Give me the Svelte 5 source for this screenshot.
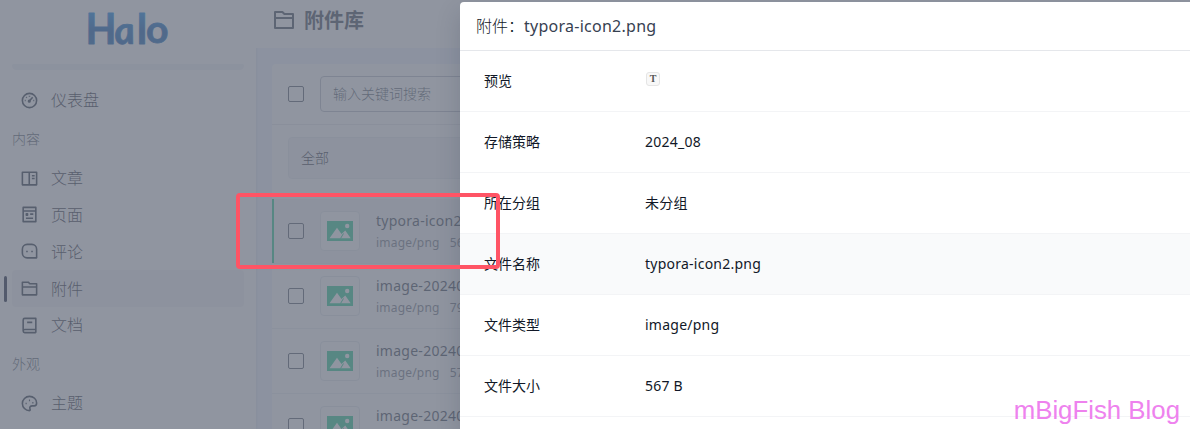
<script>
  const icons = {
    dash: '<circle cx="12" cy="12" r="9"/><path d="M11 13.5l5-5.5M12 6v1.2M7.8 7.8l.8.8M6 12h1.2M16.8 12H18"/><circle cx="11.7" cy="12.8" r="1"/>',
    post: '<path d="M3 4h18v16H3zM11.7 4v16M15 8.5h3.5M15 12h3.5"/>',
    page: '<path d="M4 3h16v18H4zM4 7.5h16M12.8 11.5h4M7.5 16.8h9"/><path d="M8 11v2h1.5v-2z"/>',
    chat: '<path d="M9 3h6a6 6 0 0 1 6 6v11H9a6 6 0 0 1-6-6V9a6 6 0 0 1 6-6z"/><path d="M8.8 11v2M15.2 11v2"/>',
    folder: '<path d="M3 4h7.4l2 2H21v14H3zM3 10h18"/>',
    book: '<path d="M20 17V3H6a2 2 0 0 0-2 2v14a2 2 0 0 0 2 2h14M4 19a2 2 0 0 1 2-2h14v4M9 8h6.5"/>',
    palette: '<path d="M12 3a9 9 0 1 0 0 18c1 0 1-1 .6-2.100C11.700 16.500 13 15 15.500 15H18c2 0 3-1.700 3-3.700C21 6.500 17 3 12 3z"/><path d="M7 12h1.500M11.300 8h1.400M15.500 11h1.500"/>'
  };
  const content = [
    ['post', '文章'], ['page', '页面'], ['chat', '评论'], ['folder', '附件'], ['book', '文档']
  ];
  const files = [
    ['typora-icon2.png', '567 B'],
    ['image-20240813.png', '79.2 KB'],
    ['image-20240812.png', '57.1 KB'],
    ['image-20240811.png', '']
  ];
  const details = [
    ['预览', null], ['存储策略', '2024_08'], ['所在分组', '未分组'],
    ['文件名称', 'typora-icon2.png'], ['文件类型', 'image/png'], ['文件大小', '567 B']
  ];
</script>

{#snippet icon(name)}
  <svg class="icon" viewBox="0 0 24 24">{@html icons[name]}</svg>
{/snippet}

{#snippet item(name, label)}
  <div class="item" class:active={name === 'folder'}>{@render icon(name)}<span>{label}</span></div>
{/snippet}

<div class="app">
  <aside>
    <svg class="logo" viewBox="0 0 84 40" width="84" height="40">
      <defs>
        <linearGradient id="lg" gradientUnits="userSpaceOnUse" x1="0" y1="5" x2="0" y2="37">
          <stop offset="0" stop-color="#0080e4" />
          <stop offset=".6" stop-color="#0050a8" />
          <stop offset="1" stop-color="#0058ac" />
        </linearGradient>
        <linearGradient id="lga" gradientUnits="userSpaceOnUse" x1="0" y1="-24" x2="0" y2="0">
          <stop offset="0" stop-color="#0068c4" />
          <stop offset="1" stop-color="#0050a8" />
        </linearGradient>
      </defs>
      <g fill="url(#lg)" stroke="url(#lg)" stroke-width=".8" stroke-linejoin="round">
        <text x="-.5" y="36.500" textLength="31" lengthAdjust="spacingAndGlyphs">H</text>
        <text class="slant" fill="url(#lga)" stroke="url(#lga)" transform="translate(29.800 36.500) skewX(8) scale(.94 .91)">a</text>
        <text x="50.700" y="36.500">l</text>
        <text x="60" y="36.300" textLength="22.500" lengthAdjust="spacingAndGlyphs" class="round">o</text>
      </g>
    </svg>
    <div class="search"></div>
    <nav>
      {@render item('dash', '仪表盘')}
      <div class="label">内容</div>
      {#each content as [name, label]}{@render item(name, label)}{/each}
      <div class="label">外观</div>
      {@render item('palette', '主题')}
    </nav>
  </aside>

  <main>
    <header>{@render icon('folder')}<h1>附件库</h1></header>
    <section class="card">
      <div class="toolbar"><i class="check"></i><div class="input">输入关键词搜索</div></div>
      <div class="group">全部</div>
      {#each files as [name, size], i}
        <div class="file" class:selected={i === 0}>
          <i class="check"></i>
          <div class="thumb">
            <svg viewBox="0 0 26 20" width="26" height="20">
              <path d="M0 0h26v20H0z" fill="#1cc88c" />
              <path d="M2.500 17.300 10 6.700l4.500 6.400 3.800-3.600 5.400 7.800z" fill="#fff" />
              <path d="M13.500 17.500l3-5" stroke="#1cc88c" />
              <circle cx="20.200" cy="5" r="2.200" fill="#fff" />
            </svg>
          </div>
          <div class="meta">
            <b>{name}</b>
            <small>{#if size}<span>image/png</span><span>{size}</span>{/if}</small>
          </div>
        </div>
      {/each}
    </section>
  </main>

  <div class="mask"></div>

  <div class="drawer">
    <div class="title">附件：<span>typora-icon2.png</span></div>
    {#each details as [label, value]}
      <div class="row" class:hover={label === '文件名称'}>
        <div class="key">{label}</div>
        <div class="value">{#if value}{value}{:else}<span class="preview">T</span>{/if}</div>
      </div>
    {/each}
  </div>

  <div class="marker"></div>
  <div class="watermark">mBigFish Blog</div>
</div>

<style>
  .app {
    position: relative;
    display: flex;
    width: 1190px;
    height: 429px;
    overflow: hidden;
    background: #eff4ff;
    color: #374151;
    font-family: "Noto Sans", "Noto Sans CJK SC", sans-serif;
    font-weight: 300;
  }
  .app * { box-sizing: border-box; }
  .icon {
    width: 20px;
    height: 20px;
    flex: none;
    fill: none;
    stroke: currentColor;
    stroke-width: 2;
    stroke-linejoin: round;
  }
  aside {
    width: 256px;
    flex: none;
    background: #fff;
    box-shadow: 0 0 3px #cbd5e1;
    display: flex;
    flex-direction: column;
  }
  .logo { margin: 7px 0 0 86px; flex: none; overflow: visible; }
  .logo text { font: 700 42px Lato, sans-serif; }
  .logo .slant { font-style: italic; }
  .logo .round { font-size: 39px; }
  .search {
    height: 6px;
    margin: 17px 12px 12px;
    background: #f0f1f5;
    border-radius: 2px 2px 6px 6px;
    flex: none;
  }
  nav { padding: 0 12px; }
  .item {
    position: relative;
    display: flex;
    align-items: center;
    height: 36.8px;
    padding-left: 8px;
    gap: 12px;
    border-radius: 4px;
    font-size: 16px;
    line-height: 24px;
    color: #1c2534;
  }
  .item .icon { width: 19px; height: 19px; color: #1f2a3b; }
  .item.active { background: #f3f4f6; }
  .item.active::before {
    content: "";
    position: absolute;
    left: -8px;
    top: 6px;
    width: 3px;
    height: 26px;
    border-radius: 2px;
    background: #0e1731;
  }
  .label {
    height: 41px;
    line-height: 39px;
    font-size: 14px;
    color: #4b5563;
  }
  main { flex: 1; min-width: 0; }
  header {
    display: flex;
    align-items: center;
    gap: 8px;
    height: 48px;
    padding: 0 0 8px 16px;
    background: #fff;
  }
  header .icon { width: 24px; height: 24px; }
  h1 { margin: 2px 0 0; font-size: 20px; line-height: 28px; font-weight: 700; }
  .card { margin: 16px; background: #fff; border-radius: 4px; }
  .toolbar {
    display: flex;
    align-items: center;
    height: 61px;
    padding-left: 16px;
    gap: 16px;
    border-bottom: 1px solid #e5e7eb;
  }
  .check {
    width: 16px;
    height: 16px;
    flex: none;
    border: 1px solid #4b5563;
    border-radius: 2px;
  }
  .input {
    flex: 1;
    height: 36px;
    line-height: 34px;
    padding-left: 12px;
    border: 1px solid #b7bdc7;
    border-radius: 4px;
    font-size: 14px;
    color: #4b5563;
  }
  .group {
    height: 42px;
    line-height: 40px;
    margin: 12px 16px 20px;
    padding-left: 12px;
    border: 1px solid #e8ebf0;
    border-radius: 4px;
    background: #f3f4f6;
    font-size: 14px;
    color: #1c2534;
  }
  .file {
    display: flex;
    align-items: center;
    height: 65px;
    padding-left: 16px;
    border-bottom: 1px solid #eceef1;
  }
  .file.selected {
    background: #f3f4f6;
    box-shadow: inset 2px 0 #1cc88c;
  }
  .thumb {
    display: flex;
    align-items: center;
    justify-content: center;
    width: 40px;
    height: 40px;
    margin: 0 16px;
    border: 1px solid #e2e6ec;
    border-radius: 4px;
    background: #fff;
    flex: none;
  }
  .meta { display: flex; flex-direction: column; white-space: nowrap; padding-top: 2px; }
  .meta b { font-size: 14px; line-height: 22px; font-weight: 400; letter-spacing: .26px; }
  .meta small {
    display: flex;
    gap: 10px;
    height: 22px;
    font-size: 12px;
    line-height: 22px;
    font-weight: 400;
    letter-spacing: .2px;
    color: #6b7280;
  }
  .mask { position: absolute; inset: 0; background: rgba(107, 114, 128, .75); }
  .drawer {
    position: absolute;
    left: 460px;
    top: 2px;
    right: 0;
    bottom: 0;
    background: #fff;
    border-radius: 4px 0 0 0;
    box-shadow: 0 10px 24px rgba(30, 40, 60, .18);
    color: #111827;
  }
  .title {
    height: 49px;
    padding-left: 16px;
    line-height: 48px;
    border-bottom: 1px solid #e5e7eb;
    font-size: 16px;
  }
  .title span { font-weight: 400; color: #374151; letter-spacing: .26px; }
  .row {
    display: flex;
    align-items: center;
    height: 61px;
    padding: 0 0 2px 24px;
    border-bottom: 1px solid #f3f4f6;
    font-size: 14px;
    font-weight: 400;
  }
  .row.hover { background: #f9fafb; }
  .key { width: 161px; }
  .value { letter-spacing: .24px; }
  .preview {
    display: block;
    width: 14px;
    height: 14px;
    margin: -3px 0 0 1px;
    border: 1px solid #e5e5e5;
    border-radius: 3px;
    background: #f8f8f8;
    color: #555;
    font: 700 10px/12px "Liberation Serif", serif;
    letter-spacing: 0;
    text-align: center;
  }
  .marker {
    position: absolute;
    left: 236px;
    top: 193px;
    width: 264px;
    height: 76px;
    border: 4px solid #ff5465;
    border-radius: 4px;
  }
  .watermark {
    position: absolute;
    right: 10px;
    bottom: 4px;
    color: #ee82ee;
    font: 400 25.800px/30px "Liberation Sans", sans-serif;
  }
</style>
